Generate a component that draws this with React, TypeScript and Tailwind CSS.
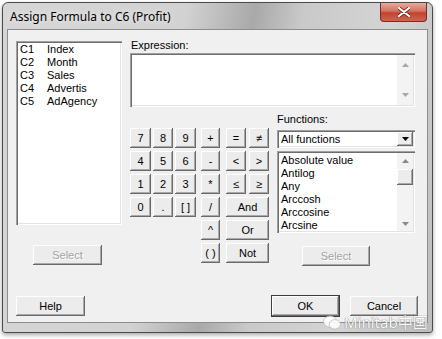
import type { ReactNode } from "react";

const COLUMNS = [
  { id: "C1", name: "Index" },
  { id: "C2", name: "Month" },
  { id: "C3", name: "Sales" },
  { id: "C4", name: "Advertis" },
  { id: "C5", name: "AdAgency" },
];

const FUNCTIONS = ["Absolute value", "Antilog", "Any", "Arccosh", "Arccosine", "Arcsine"];

const raised =
  "bg-[#ececec] shadow-[inset_-1px_-1px_0_#6a6a6a,inset_1px_1px_0_#ffffff,inset_-2px_-2px_0_#a9a9a9]";
const sunken =
  "bg-white shadow-[inset_1px_1px_0_#a0a0a0,inset_2px_2px_0_#6d6d6d,inset_-1px_-1px_0_#ffffff,inset_-2px_-2px_0_#e3e3e3]";

function Btn({
  children,
  className = "",
  disabled = false,
}: {
  children: ReactNode;
  className?: string;
  disabled?: boolean;
}) {
  return (
    <div
      className={`flex items-center justify-center h-[20px] text-[11px] ${raised} ${
        disabled ? "text-[#a3a3a3] [text-shadow:1px_1px_0_#fff]" : "text-black"
      } ${className}`}
    >
      {children}
    </div>
  );
}

function Arrow({ up, color = "#8a8a8a" }: { up?: boolean; color?: string }) {
  return (
    <svg width="7" height="4" viewBox="0 0 7 4">
      <path d={up ? "M0 4 L3.5 0 L7 4 Z" : "M0 0 L7 0 L3.5 4 Z"} fill={color} />
    </svg>
  );
}

export default function App() {
  return (
    <div className="w-[442px] h-[339px] bg-white overflow-hidden font-['Liberation_Sans',Arial,sans-serif] relative">
      {/* Window */}
      <div className="ml-[2px] mt-[2px] w-[431px] h-[331px] rounded-t-[6px] rounded-b-[3px] border border-[#4b4b4b] bg-[linear-gradient(100deg,#d6d6d6_0%,#d2d2d2_38%,#a9a9a9_52%,#c9c9c9_62%,#d4d4d4_80%,#bdbdbd_100%)] shadow-[0_2px_4px_rgba(0,0,0,0.35)] flex flex-col">
        {/* Title bar */}
        <div className="h-[27px] flex items-start justify-between">
          <div className="pl-[7px] pt-[6px] text-[12px] leading-[16px] text-black font-['Noto_Sans',sans-serif] [text-shadow:0_0_6px_#fff]">
            Assign Formula to C6 (Profit)
          </div>
          <div className="mr-[5px] w-[47px] h-[19px] rounded-b-[4px] border border-[#7a2a22] border-t-0 bg-[linear-gradient(180deg,#e9a99c_0%,#d27261_45%,#c0432f_55%,#d0654e_100%)] flex items-center justify-center">
            <svg width="12" height="10" viewBox="0 0 12 10">
              <path d="M1 1 L11 9 M11 1 L1 9" stroke="#5a1a14" strokeWidth="3.4" strokeLinecap="round" />
              <path d="M1 1 L11 9 M11 1 L1 9" stroke="#ffffff" strokeWidth="2.2" strokeLinecap="round" />
            </svg>
          </div>
        </div>

        {/* Client area */}
        <div className="mx-[5px] h-[292px] bg-[#f0f0f0] shadow-[0_0_0_1px_#8d8d8d] flex flex-col px-[8px] pt-[9px]">
          <div className="flex">
            {/* Columns list */}
            <div className="w-[106px] flex flex-col">
              <div className={`mt-[2px] h-[184px] ${sunken} pl-[4px] pt-[2px]`}>
                {COLUMNS.map((c) => (
                  <div key={c.id} className="flex h-[13px] text-[11px] leading-[13px] text-black">
                    <span className="w-[27px]">{c.id}</span>
                    <span>{c.name}</span>
                  </div>
                ))}
              </div>
              <Btn disabled className="mt-[20px] ml-[17px] w-[69px] h-[19px]">
                Select
              </Btn>
            </div>

            {/* Right area */}
            <div className="ml-[8px] w-[285px] flex flex-col">
              <div className="h-[12px] leading-[12px] text-[11px] text-black pl-[1px] mb-[2px]">Expression:</div>
              <div className={`h-[54px] ${sunken} flex justify-end`}>
                <div className="w-[16px] my-[2px] mr-[2px] bg-[#f3f3f3] flex flex-col items-center justify-between py-[8px]">
                  <Arrow up color="#a8a8a8" />
                  <Arrow color="#a8a8a8" />
                </div>
              </div>

              <div className="flex">
                {/* Keypad */}
                <div className="w-[139px] pt-[21px] flex flex-col gap-[3px]">
                  <div className="flex">
                    <Btn className="w-[21px]">7</Btn>
                    <Btn className="w-[20px] ml-[2px]">8</Btn>
                    <Btn className="w-[21px] ml-[2px]">9</Btn>
                    <Btn className="w-[19px] ml-[5px]">+</Btn>
                    <Btn className="w-[20px] ml-[6px]">=</Btn>
                    <Btn className="w-[20px] ml-[3px]">≠</Btn>
                  </div>
                  <div className="flex">
                    <Btn className="w-[21px]">4</Btn>
                    <Btn className="w-[20px] ml-[2px]">5</Btn>
                    <Btn className="w-[21px] ml-[2px]">6</Btn>
                    <Btn className="w-[19px] ml-[5px]">-</Btn>
                    <Btn className="w-[20px] ml-[6px]">&lt;</Btn>
                    <Btn className="w-[20px] ml-[3px]">&gt;</Btn>
                  </div>
                  <div className="flex">
                    <Btn className="w-[21px]">1</Btn>
                    <Btn className="w-[20px] ml-[2px]">2</Btn>
                    <Btn className="w-[21px] ml-[2px]">3</Btn>
                    <Btn className="w-[19px] ml-[5px]">*</Btn>
                    <Btn className="w-[20px] ml-[6px]">≤</Btn>
                    <Btn className="w-[20px] ml-[3px]">≥</Btn>
                  </div>
                  <div className="flex">
                    <Btn className="w-[21px]">0</Btn>
                    <Btn className="w-[20px] ml-[2px]">.</Btn>
                    <Btn className="w-[21px] ml-[2px]">[ ]</Btn>
                    <Btn className="w-[19px] ml-[5px]">/</Btn>
                    <Btn className="w-[43px] ml-[6px]">And</Btn>
                  </div>
                  <div className="flex">
                    <Btn className="w-[19px] ml-[71px]">^</Btn>
                    <Btn className="w-[43px] ml-[6px]">Or</Btn>
                  </div>
                  <div className="flex">
                    <Btn className="w-[19px] ml-[71px]">( )</Btn>
                    <Btn className="w-[43px] ml-[6px]">Not</Btn>
                  </div>
                </div>

                {/* Functions */}
                <div className="ml-[8px] w-[138px] flex flex-col">
                  <div className="mt-[6px] h-[12px] leading-[12px] text-[11px] text-black">Functions:</div>
                  <div className={`mt-[5px] h-[18px] ${sunken} flex items-center justify-between`}>
                    <span className="pl-[4px] text-[11px] text-black">All functions</span>
                    <div className={`w-[16px] h-[14px] mr-[2px] ${raised} flex items-center justify-center`}>
                      <Arrow color="#000" />
                    </div>
                  </div>
                  <div className={`mt-[3px] h-[82px] ${sunken} flex`}>
                    <div className="flex-1 pl-[4px] pt-[3px]">
                      {FUNCTIONS.map((f) => (
                        <div key={f} className="h-[13px] leading-[13px] text-[11px] text-black whitespace-nowrap">
                          {f}
                        </div>
                      ))}
                    </div>
                    <div className="w-[16px] my-[2px] mr-[2px] bg-[#f3f3f3] flex flex-col items-center">
                      <div className="h-[16px] flex items-center">
                        <Arrow up />
                      </div>
                      <div className={`w-[16px] h-[16px] ${raised}`} />
                      <div className="flex-1" />
                      <div className="h-[14px] flex items-center">
                        <Arrow />
                      </div>
                    </div>
                  </div>
                  <Btn disabled className="mt-[13px] ml-[25px] w-[68px] h-[19px]">
                    Select
                  </Btn>
                </div>
              </div>
            </div>
          </div>

          {/* Bottom buttons */}
          <div className="mt-[30px] flex">
            <Btn className="w-[69px] h-[19px]">Help</Btn>
            <Btn className="ml-[187px] w-[67px] h-[19px] outline outline-1 outline-[#3c3c3c]">OK</Btn>
            <Btn className="ml-[11px] w-[68px] h-[19px]">Cancel</Btn>
          </div>
        </div>
      </div>

      {/* Watermark */}
      <div className="absolute left-[322px] top-[315px] flex items-center gap-[2px] opacity-90">
        <svg width="20" height="15" viewBox="0 0 20 16">
          <ellipse cx="8" cy="7" rx="7" ry="6" fill="#fff" stroke="#b5b5b5" strokeWidth="0.8" />
          <ellipse cx="13" cy="10" rx="6" ry="5" fill="#fff" stroke="#b5b5b5" strokeWidth="0.8" />
        </svg>
        <span className="text-[15px] leading-[15px] text-white font-['Noto_Sans','Noto_Sans_CJK_SC',sans-serif] [text-shadow:0_0_1px_#777,0_0_1px_#777]">
          Minitab中国
        </span>
      </div>
    </div>
  );
}
